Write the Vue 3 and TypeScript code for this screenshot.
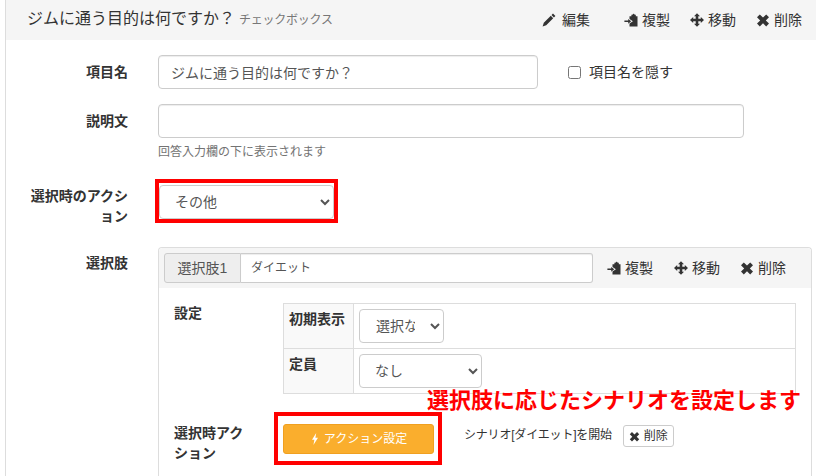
<script setup lang="ts">
const actions = [
  { key: 'copy', label: '複製' },
  { key: 'move', label: '移動' },
  { key: 'remove', label: '削除' },
]
</script>

<template>
  <div class="page">
    <div class="card">
      <header class="card-head">
        <div class="title">ジムに通う目的は何ですか？<small>チェックボックス</small></div>
        <nav class="tools">
          <span class="tool edit">
            <svg class="ico" viewBox="0 0 14 14"><path d="M11 .6l2.4 2.4-1.5 1.5-2.4-2.4zM8.8 2.8l2.4 2.4-7 7L.6 13.4l1.2-3.6z" /></svg>編集
          </span>
          <span v-for="a in actions" :key="a.key" class="tool" :class="a.key">
            <svg v-if="a.key === 'copy'" class="ico" viewBox="0 0 14 14"><path d="M5.5 3.2h1.9V1.8h1.2a1 1 0 0 1 2 0h1.2v1.4h1.7v10.2H5.5v-2.8l3.4-2.3L5.5 6zM.4 7.6h3.8V5.9l3 2.4-3 2.4V9H.4z" /></svg>
            <svg v-else-if="a.key === 'move'" class="ico" viewBox="0 0 14 14"><path d="M7 .2l3 3H8.3v2.5h2.5V4L14 7l-3.2 3V8.3H8.3v2.5H10L7 13.8l-3-3h1.7V8.3H3.2V10L0 7l3.2-3v1.7h2.5V3.2H4z" /></svg>
            <svg v-else class="ico" viewBox="0 0 14 14"><path d="M3.8 1.4L7 4.6l3.2-3.2 2.8 2.8L9.8 7.4l3.2 3.2-2.8 2.8L7 10.2l-3.2 3.2L1 10.6l3.2-3.2L1 4.2z" /></svg>{{ a.label }}
          </span>
        </nav>
      </header>

      <div class="form">
        <div class="row row-name">
          <label class="lbl">項目名</label>
          <div class="field name-field">
            <input class="input name" value="ジムに通う目的は何ですか？" />
            <label class="hide"><input type="checkbox" />項目名を隠す</label>
          </div>
        </div>

        <div class="row row-desc">
          <label class="lbl">説明文</label>
          <div class="field">
            <input class="input desc" />
            <p class="help">回答入力欄の下に表示されます</p>
          </div>
        </div>

        <div class="row row-action">
          <label class="lbl">選択時のアクション</label>
          <div class="field">
            <div class="mark mark-select">
              <select class="select s-action"><option>その他</option></select>
            </div>
          </div>
        </div>

        <div class="row row-options">
          <label class="lbl">選択肢</label>
          <section class="panel">
            <div class="panel-head">
              <div class="group">
                <span class="addon">選択肢1</span>
                <input class="group-input" value="ダイエット" />
              </div>
              <nav class="tools inner">
                <span v-for="a in actions" :key="a.key" class="tool" :class="a.key">
                  <svg v-if="a.key === 'copy'" class="ico" viewBox="0 0 14 14"><path d="M5.5 3.2h1.9V1.8h1.2a1 1 0 0 1 2 0h1.2v1.4h1.7v10.2H5.5v-2.8l3.4-2.3L5.5 6zM.4 7.6h3.8V5.9l3 2.4-3 2.4V9H.4z" /></svg>
                  <svg v-else-if="a.key === 'move'" class="ico" viewBox="0 0 14 14"><path d="M7 .2l3 3H8.3v2.5h2.5V4L14 7l-3.2 3V8.3H8.3v2.5H10L7 13.8l-3-3h1.7V8.3H3.2V10L0 7l3.2-3v1.7h2.5V3.2H4z" /></svg>
                  <svg v-else class="ico" viewBox="0 0 14 14"><path d="M3.8 1.4L7 4.6l3.2-3.2 2.8 2.8L9.8 7.4l3.2 3.2-2.8 2.8L7 10.2l-3.2 3.2L1 10.6l3.2-3.2L1 4.2z" /></svg>{{ a.label }}
                </span>
              </nav>
            </div>
            <div class="panel-body">
              <div class="sub sub-settings">
                <div class="sub-lbl">設定</div>
                <table class="tbl">
                  <tbody>
                    <tr>
                      <th>初期表示</th>
                      <td><select class="select s-init"><option>選択なし</option></select></td>
                    </tr>
                    <tr>
                      <th>定員</th>
                      <td><select class="select s-cap"><option>なし</option></select></td>
                    </tr>
                  </tbody>
                </table>
              </div>
              <div class="sub sub-action">
                <div class="sub-lbl">選択時アクション</div>
                <div class="mark mark-btn">
                  <button class="btn-action">
                    <svg class="bolt" viewBox="0 0 8 12"><path d="M5.2 0L1 6.8h2.4L2.4 12 7 4.8H4.4z" /></svg>アクション設定
                  </button>
                </div>
                <span class="scenario">シナリオ[ダイエット]を開始</span>
                <button class="btn-del">
                  <svg class="ico" viewBox="0 0 14 14"><path d="M3.8 1.4L7 4.6l3.2-3.2 2.8 2.8L9.8 7.4l3.2 3.2-2.8 2.8L7 10.2l-3.2 3.2L1 10.6l3.2-3.2L1 4.2z" /></svg>削除
                </button>
              </div>
            </div>
          </section>
        </div>
      </div>
    </div>
    <div class="note">選択肢に応じたシナリオを設定します</div>
  </div>
</template>

<style>
html, body { margin: 0; background: #fff; }
</style>

<style scoped>
.page {
  position: relative;
  width: 816px;
  height: 476px;
  overflow: hidden;
  background: #fff;
  color: #333;
  font-family: "Liberation Sans", "Noto Sans CJK JP", sans-serif;
  font-size: 14px;
  line-height: 20px;
}
.card {
  margin-left: 5px;
  border-left: 1px solid #ddd;
  height: 476px;
  box-sizing: border-box;
}
.card-head {
  height: 40px;
  background: #f5f5f5;
  display: flex;
  align-items: center;
  justify-content: space-between;
  padding-left: 21px;
  box-sizing: border-box;
}
.title { font-size: 16px; color: #333; white-space: nowrap; margin-top: -2px; }
.title small { font-size: 12px; color: #777; margin-left: 4px; letter-spacing: -.25px; }
.tools { display: flex; align-items: center; white-space: nowrap; color: #333; }
.tool { display: inline-flex; align-items: center; }
.ico { width: 14px; height: 14px; fill: #333; margin-right: 4px; flex: none; }
.card-head .tools { padding-right: 14px; }
.card-head .edit { margin-right: 34px; }
.card-head .edit .ico { margin-left: -2px; margin-right: 6px; }
.card-head .copy { margin-right: 20px; }
.card-head .move { margin-right: 20px; }
.form { padding-top: 15px; }
.row { display: grid; grid-template-columns: 122px 1fr; column-gap: 30px; }
.lbl {
  font-weight: 700;
  text-align: right;
  padding-top: 7px;
  padding-left: 22px;
  color: #333;
}
.row-desc { margin-top: 15px; }
.row-action { margin-top: 17px; }
.row-options { margin-top: 21px; }
.row-options .lbl { padding-top: 0; margin-top: 6px; }
.field { min-width: 0; }
.name-field { display: flex; align-items: center; }
.input {
  display: block;
  box-sizing: border-box;
  height: 34px;
  border: 1px solid #ccc;
  border-radius: 4px;
  padding: 6px 12px;
  font: inherit;
  color: #555;
  background: #fff;
  box-shadow: inset 0 1px 1px rgba(0, 0, 0, .075);
}
.input.name { width: 380px; }
.input.desc { width: 586px; }
.hide { display: inline-flex; align-items: center; margin-left: 30px; color: #333; }
.hide input { width: 13px; height: 13px; margin: 0 8px 0 0; }
.help { margin: 4px 0 0; font-size: 12px; line-height: 20px; color: #737373; }
.mark { border: 4px solid #f00; box-sizing: border-box; }
.mark-select { width: 183px; height: 44px; margin-left: -3px; padding: 2px 1px 0 0; }
.select {
  box-sizing: border-box;
  height: 34px;
  border: 1px solid #ccc;
  border-radius: 4px;
  padding: 6px 12px;
  font: inherit;
  color: #555;
  background: #fff;
  display: block;
}
.s-action { width: 175px; padding-left: 11px; }
.s-init { width: 85px; }
.s-cap { width: 123px; padding-left: 11px; }
.panel {
  width: 654px;
  height: 240px;
  box-sizing: border-box;
  border: 1px solid #ddd;
  border-bottom: 0;
  border-radius: 4px 4px 0 0;
}
.panel-head {
  height: 40px;
  background: #f5f5f5;
  display: flex;
  align-items: center;
  padding: 0 5px;
  box-sizing: border-box;
  border-radius: 4px 4px 0 0;
}
.group { display: flex; width: 429px; height: 30px; box-sizing: border-box; }
.addon {
  width: 77px;
  box-sizing: border-box;
  border: 1px solid #ccc;
  border-radius: 3px 0 0 3px;
  background: #eee;
  color: #555;
  text-align: center;
  line-height: 28px;
  flex: none;
}
.group-input {
  flex: 1;
  min-width: 0;
  box-sizing: border-box;
  border: 1px solid #ccc;
  border-left: 0;
  border-radius: 0 3px 3px 0;
  padding: 5px 10px;
  font: inherit;
  font-size: 12px;
  color: #555;
  background: #fff;
  box-shadow: inset 0 1px 1px rgba(0, 0, 0, .075);
}
.tools.inner { margin-left: 14px; }
.inner .copy { margin-right: 21px; }
.inner .move { margin-right: 20px; }
.panel-body { padding: 15px 15px 0; }
.sub { display: flex; }
.sub-lbl { font-weight: 700; color: #333; width: 109px; flex: none; }
.tbl { width: 513px; border-collapse: collapse; }
.tbl th, .tbl td { border: 1px solid #ddd; padding: 5px; vertical-align: top; text-align: left; }
.tbl th { width: 59px; background: #f9f9f9; color: #333; }
.sub-action { margin-top: 18px; align-items: flex-start; }
.sub-action .sub-lbl { width: 80px; margin-right: 20px; padding-top: 11px; }
.mark-btn { width: 168px; height: 53px; padding: 8px 4px 0 5px; flex: none; }
.btn-action {
  display: flex;
  align-items: center;
  justify-content: center;
  width: 151px;
  height: 30px;
  box-sizing: border-box;
  border: 1px solid #f0a020;
  border-radius: 3px;
  background: #faae2d;
  color: #fff;
  font: inherit;
  font-size: 12px;
  padding: 0 0 0 1px;
}
.bolt { width: 8px; height: 12px; fill: #fff; margin-right: 5px; }
.scenario { font-size: 12px; margin: 13px 0 0 22px; color: #333; letter-spacing: -.2px; }
.btn-del {
  display: inline-flex;
  align-items: center;
  height: 22px;
  width: 51px;
  box-sizing: border-box;
  padding: 0 5px;
  border: 1px solid #ccc;
  border-radius: 3px;
  background: #fff;
  color: #333;
  font: inherit;
  font-size: 12px;
  margin: 13px 0 0 11px;
}
.btn-del .ico { width: 11px; height: 11px; margin-right: 4px; }
.note {
  position: absolute;
  left: 427px;
  top: 386px;
  font-size: 22px;
  line-height: 30px;
  font-weight: 700;
  color: #f00;
  white-space: nowrap;
}
</style>
